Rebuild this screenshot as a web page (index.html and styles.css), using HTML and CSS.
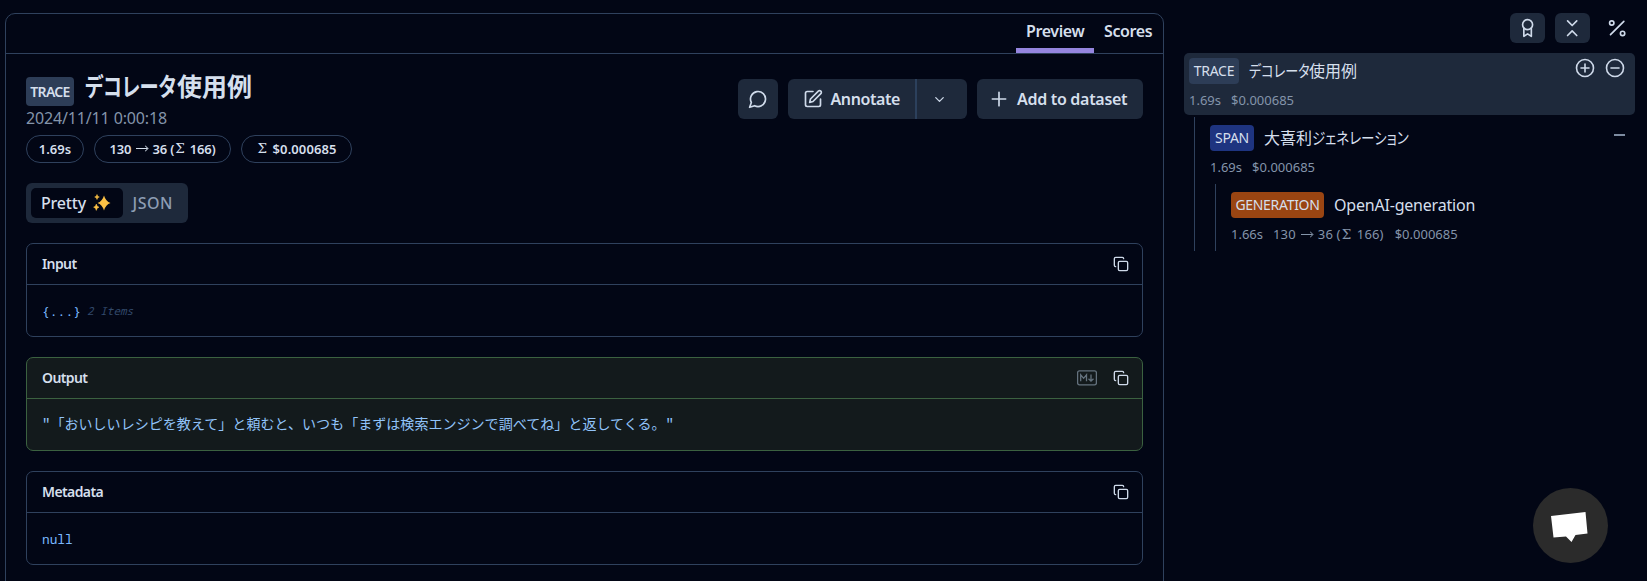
FILE: index.html
```html
<!DOCTYPE html>
<html lang="ja">
<head>
<meta charset="utf-8">
<title>Trace</title>
<link rel="stylesheet" href="styles.css">
</head>
<body>
<svg class="defs" width="0" height="0" aria-hidden="true">
  <symbol id="copy" viewBox="0 0 24 24"><rect x="8" y="8" width="14" height="14" rx="2"/><path d="M4 16c-1.1 0-2-.9-2-2V4c0-1.1.9-2 2-2h10c1.1 0 2 .9 2 2"/></symbol>
</svg>
<div class="app">
  <main class="panel">
    <nav class="tabs">
      <a class="tab active"><span>Preview</span></a>
      <a class="tab"><span>Scores</span></a>
    </nav>
    <div class="content">
      <header class="head">
        <div class="info">
          <div class="title-row"><span class="badge badge-lg">TRACE</span><h1><span class="kana k-title">デコレータ</span>使用例</h1></div>
          <div class="date">2024/11/11 0:00:18</div>
          <div class="pills">
            <span class="pill p1">1.69s</span>
            <span class="pill p2">130 <i class="arrow"></i> 36 (<b class="sigma">Σ</b> 166)</span>
            <span class="pill p3"><b class="sigma">Σ</b> $0.000685</span>
          </div>
        </div>
        <div class="actions">
          <button class="btn comment"><svg class="icon" width="20" height="20" viewBox="0 0 24 24"><path d="M7.9 20A9 9 0 1 0 4 16.1L2 22Z"/></svg></button>
          <div class="split">
            <button class="btn annotate"><svg class="icon" width="20" height="20" viewBox="0 0 24 24"><path d="M12 3H5a2 2 0 0 0-2 2v14a2 2 0 0 0 2 2h14a2 2 0 0 0 2-2v-7"/><path d="M18.4 2.6a2.12 2.12 0 0 1 3 3L12 15l-4 1 1-4Z"/></svg><span>Annotate</span></button>
            <button class="btn more"><svg class="icon" width="15" height="15" viewBox="0 0 24 24"><path d="m6 9 6 6 6-6"/></svg></button>
          </div>
          <button class="btn add"><svg class="icon" width="20" height="20" viewBox="0 0 24 24"><path d="M4 12h16M12 4v16"/></svg><span>Add to dataset</span></button>
        </div>
      </header>
      <div class="toggle"><span class="opt on"><span>Pretty</span>
        <svg width="18" height="18" viewBox="0 0 18 18" fill="#fcc145"><path d="M11 1.500Q12.700 7.300 17.500 9Q12.700 10.700 11 16.500Q9.300 10.700 4.500 9Q9.300 7.300 11 1.500Z"/><path d="M4 .5Q4.300 2.600 6.300 3Q4.300 3.400 4 5.500Q3.700 3.400 1.700 3Q3.700 2.600 4 .5ZM3.300 10Q3.700 12.800 6 13.200Q3.700 13.600 3.300 16.400Q2.900 13.600.6 13.200Q2.900 12.800 3.300 10Z" stroke="#fcc145" stroke-width=".5"/></svg></span><span class="opt">JSON</span></div>
      <section class="card">
        <h2><span>Input</span><svg class="icon" width="16" height="16"><use href="#copy"/></svg></h2>
        <div class="body"><code class="obj">{...}</code><em>2 Items</em></div>
      </section>
      <section class="card output">
        <h2><span>Output</span><svg class="md" width="20" height="16" viewBox="0 0 20 16"><rect x=".6" y=".9" width="18.800" height="14" rx="1.800"/><path d="M3.700 11.200V4.800L6.600 8.300L9.500 4.800V11.200M14 4.500V11M11.500 8.700L14 11.200L16.500 8.700"/></svg><svg class="icon" width="16" height="16"><use href="#copy"/></svg></h2>
        <div class="body"><code class="str">"「おいしいレシピを教えて」と頼むと、いつも「まずは検索エンジンで調べてね」と返してくる。"</code></div>
      </section>
      <section class="card">
        <h2><span>Metadata</span><svg class="icon" width="16" height="16"><use href="#copy"/></svg></h2>
        <div class="body"><code>null</code></div>
      </section>
    </div>
  </main>
  <aside class="side">
    <div class="tools">
      <button class="tool"><svg class="icon" width="20" height="20" viewBox="0 0 24 24"><circle cx="11.500" cy="8" r="6"/><path d="M7 12.500V22l4.500-3 4.500 3v-9.500"/></svg></button>
      <button class="tool"><svg class="icon" width="20" height="20" viewBox="0 0 24 24"><path d="m5.500 21 5.500-5.500 5.500 5.500M5.500 3.500 11 9l5.500-5.500"/></svg></button>
      <button class="tool plain"><svg class="icon" width="20" height="20" viewBox="0 0 24 24"><path d="M19 4 3 20"/><circle cx="4.500" cy="6" r="2.600"/><circle cx="17.500" cy="18.500" r="2.600"/></svg></button>
    </div>
    <div class="node root">
      <div class="line"><span class="badge w50">TRACE</span><span class="name"><span class="kana k-trace">デコレータ</span>使用例</span>
        <span class="ends"><svg class="icon" width="20" height="20" viewBox="0 0 20 20"><circle cx="10" cy="10" r="8.500"/><path d="M6 10h8M10 6v8"/></svg><svg class="icon" width="20" height="20" viewBox="0 0 20 20"><circle cx="10" cy="10" r="8.500"/><path d="M6 10h8"/></svg></span></div>
      <div class="stats"><span>1.69s</span><span>$0.000685</span></div>
    </div>
    <div class="branch">
      <div class="node">
        <div class="line"><span class="badge span w44">SPAN</span><span class="name">大喜利<span class="kana k-span">ジェネレーション</span></span><i class="dash"></i></div>
        <div class="stats"><span>1.69s</span><span>$0.000685</span></div>
      </div>
      <div class="branch">
        <div class="node">
          <div class="line"><span class="badge gen w93">GENERATION</span><span class="name en">OpenAI-generation</span></div>
          <div class="stats"><span>1.66s</span><span class="tokens">130 <i class="arrow"></i> 36 (<b class="sigma">Σ</b> 166)</span><span>$0.000685</span></div>
        </div>
      </div>
    </div>
  </aside>
</div>
<button class="chat"><svg width="75" height="75" viewBox="0 0 75 75"><path fill="#fff" d="M18 28 52.500 24 54.500 45.500 42.500 47 38.500 54 33 48.500 20.500 49.500Z"/></svg></button>
</body>
</html>
```
FILE: styles.css
```css
* { box-sizing: border-box; }
body {
  margin: 0;
  height: 581px;
  overflow: hidden;
  background: #020615;
  color: #d5dfec;
  font: 16px/24px "Noto Sans", "Noto Sans CJK JP", sans-serif;
}
button { border: 0; padding: 0; color: inherit; font: inherit; background: none; }
svg { display: block; flex: none; }
.defs { position: absolute; }
.icon { fill: none; stroke: #cfdaea; stroke-width: 2; stroke-linecap: round; stroke-linejoin: round; }
.app { display: flex; height: 581px; padding: 13px 0 0 5px; overflow: hidden; }
.panel { width: 1159px; height: 600px; flex: none; border: 1px solid #2f415d; border-radius: 10px 10px 0 0; }
.tabs { display: flex; justify-content: flex-end; height: 40px; border-bottom: 1px solid #2f415d; }
.tab { display: flex; padding: 5px 10px 0; height: 39px; font-weight: 600; letter-spacing: -.4px; white-space: nowrap; }
.tab.active { width: 78px; border-bottom: 5px solid #9585df; }
.tab:last-child { width: 69px; }
.content { padding: 23px 20px 0; }
.head { display: flex; justify-content: space-between; height: 106px; }
.title-row { display: flex; height: 29px; gap: 11px; }
h1 { margin: -7px 0 0; font-size: 25px; line-height: 32px; font-weight: 700; white-space: nowrap; }
.kana { display: inline-block; font-feature-settings: "palt"; transform-origin: 0 50%; }
.k-title { width: 92px; transform: scaleX(.77); }
.k-trace { width: 60px; transform: scaleX(.82); }
.k-span { width: 97px; transform: scaleX(.845); }
.badge { display: flex; align-items: center; justify-content: center; height: 26px; border-radius: 4px; background: #2d3d57; font-size: 14px; flex: none; letter-spacing: -.3px; }
.badge-lg { width: 48px; height: 29px; font-weight: 600; letter-spacing: -.7px; font-size: 14px; }
.w50 { width: 50px; }
.w44 { width: 44px; }
.w93 { width: 93px; }
.badge.span { background: #1e3480; }
.badge.gen { background: #9a4512; }
.date { color: #8494aa; line-height: 24px; height: 29px; letter-spacing: -.15px; white-space: nowrap; }
.pills { display: flex; gap: 10px; }
.pill { display: flex; align-items: center; justify-content: center; height: 28px; padding-bottom: 1px; border: 1px solid #2f415d; border-radius: 14px; font-size: 13px; font-weight: 600; white-space: pre; }
.p1 { width: 58px; }
.p2 { width: 137px; letter-spacing: -.2px; }
.p3 { width: 111px; letter-spacing: .1px; }
.sigma { font: 13.500px/1 "DejaVu Serif", serif; margin: 0 2px 0 1px; }
.arrow { display: inline-block; width: 12px; height: 5px; margin: 0 1px 0 2px; background: linear-gradient(currentColor, currentColor) 0 2px / 11px 1px no-repeat; position: relative; vertical-align: 2px; }
.arrow::after { content: ""; position: absolute; right: 0; top: 0; width: 4px; height: 4px; border-top: 1px solid; border-right: 1px solid; transform: rotate(45deg) scale(.85); }
.actions { display: flex; gap: 10px; padding-top: 2px; }
.btn { display: flex; align-items: center; height: 40px; border-radius: 6px; background: #1e293b; font-weight: 600; letter-spacing: -.3px; white-space: nowrap; }
.comment { width: 40px; justify-content: center; }
.split { display: flex; }
.annotate { width: 127px; padding-left: 15px; gap: 7.500px; letter-spacing: -.4px; border-radius: 6px 0 0 6px; }
.more { width: 52px; padding-left: 15px; border-left: 2px solid #2c405c; border-radius: 0 6px 6px 0; }
.add { width: 166px; padding-left: 12px; gap: 8px; }
.toggle { display: flex; width: 162px; height: 40px; padding: 5px; margin-bottom: 20px; border-radius: 6px; background: #1e293b; }
.opt { display: flex; align-items: center; height: 30px; padding: 0 10px; color: #8d9db4; font-weight: 500; letter-spacing: .5px; }
.opt.on { width: 92px; gap: 7px; border-radius: 5px; background: #020615; color: #d5dfec; letter-spacing: -.2px; }
.card { height: 94px; margin-bottom: 20px; border: 1px solid #2f415d; border-radius: 7px; }
.card h2 { display: flex; align-items: center; height: 41px; margin: 0; padding: 0 13px 0 15px; border-bottom: 1px solid #2f415d; font-size: 14px; font-weight: 600; letter-spacing: -.6px; }
.card h2 span { margin-right: auto; }
.md { fill: none; stroke: #64727e; stroke-width: 1.300; margin-right: 16px; }
.output, .output h2 { border-color: #3b6140; }
.output { background: #131a1c; }
.body { display: flex; align-items: center; height: 51px; padding: 0 15px; }
code, em { font-family: "Noto Sans Mono", "DejaVu Sans Mono", "Noto Sans CJK JP", monospace; font-size: 12.800px; color: #79b8ff; white-space: pre; }
code.obj { font-size: 13px; }
code.str { font-family: "Liberation Mono", "Noto Sans CJK JP", monospace; font-size: 14.050px; color: #91c3f9; }
em { font-size: 11px; color: #324a6c; margin-left: 6px; }
.side { flex: 1; padding: 0 12px 0 20px; }
.tools { display: flex; justify-content: flex-end; gap: 10px; height: 40px; }
.tool { display: flex; align-items: center; justify-content: center; width: 35px; height: 30px; border-radius: 6px; background: #1e293b; }
.tool.plain { background: none; }
.node { padding: 5px 5px 0; height: 67px; }
.root { height: 62px; border-radius: 5px; background: #1e293b; }
.line { display: flex; height: 26px; gap: 10px; line-height: 26px; }
.name { white-space: nowrap; }
.name.en { letter-spacing: -.2px; }
.ends { display: flex; gap: 10px; margin-left: auto; }
.ends .icon { stroke-width: 1.600; }
.root .ends { margin-right: 5px; }
.stats { display: flex; gap: 10px; padding-top: 4px; color: #8494aa; font-size: 13px; line-height: 24px; white-space: pre; }
.tokens { letter-spacing: .15px; margin-right: 1px; }
.branch { margin: 2px 0 0 10px; padding: 3px 0 0 10px; border-left: 1px solid #2f415d; }
.branch .branch { margin-top: -3px; height: 67px; }
.dash { width: 11px; height: 2px; margin: 9px 5px 0 auto; background: #7d8ba0; }
.chat { position: absolute; left: 1533px; top: 488px; width: 75px; height: 75px; border-radius: 50%; background: #2b2b2b; }
```
